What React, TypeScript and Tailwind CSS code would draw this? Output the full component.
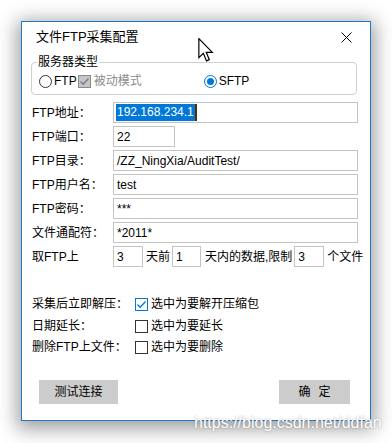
import React from "react";

const FONT = { fontFamily: '"Liberation Sans", "Noto Sans CJK SC", sans-serif' };

function Input({ w, value, selected }: { w: string; value: string; selected?: boolean }) {
  return (
    <div className={`${w} h-[21px] border border-[#c4c4c4] bg-white flex items-center pl-[2px] text-[12px] leading-[16px] text-black overflow-hidden whitespace-nowrap`}>
      {selected ? (
        <span className="flex items-center">
          <span className="bg-[#0078d7] text-white px-[1px] h-[17px] leading-[17px]">{value}</span>
          <span className="w-[2px] h-[17px] bg-[#5a2c00]" />
        </span>
      ) : (
        <span className="pl-[1px]">{value}</span>
      )}
    </div>
  );
}

function Row({ label, children }: { label: string; children: React.ReactNode }) {
  return (
    <div className="flex items-center h-[21px]">
      <div className="w-[81px] text-[12px] leading-[16px] text-black whitespace-nowrap">{label}</div>
      {children}
    </div>
  );
}

function CheckBox({ checked }: { checked?: boolean }) {
  return (
    <div className={`w-[13px] h-[13px] border ${checked ? "border-[#0078d7]" : "border-[#333333]"} bg-white flex items-center justify-center`}>
      {checked && (
        <svg width="11" height="11" viewBox="0 0 11 11">
          <path d="M1.5 5.5 L4.2 8.2 L9.5 2.5" fill="none" stroke="#0078d7" strokeWidth="1.3" />
        </svg>
      )}
    </div>
  );
}

function CheckRow({ label, text, checked, h }: { label: string; text: string; checked?: boolean; h: string }) {
  return (
    <div className={`flex items-center ${h}`}>
      <div className="w-[103px] text-[12px] leading-[16px] text-black whitespace-nowrap">{label}</div>
      <CheckBox checked={checked} />
      <span className="ml-[3px] text-[12px] leading-[16px] text-black whitespace-nowrap">{text}</span>
    </div>
  );
}

export default function App() {
  return (
    <div className="w-[392px] h-[443px] bg-white relative overflow-hidden pt-[21px] pl-[21px]" style={FONT}>
      <div className="w-[350px] h-[400px] border border-[#1c79c9] bg-white flex flex-col shadow-[0_4px_18px_4px_rgba(0,0,0,0.38)]">
        {/* title bar */}
        <div className="h-[30px] flex items-center justify-between pl-[14px] pr-[18px]">
          <span className="text-[13px] leading-[18px] text-black">文件FTP采集配置</span>
          <svg width="11" height="11" viewBox="0 0 11 11">
            <path d="M0.5 0.5 L10.5 10.5 M10.5 0.5 L0.5 10.5" stroke="#000" strokeWidth="1" />
          </svg>
        </div>

        {/* group box */}
        <fieldset className="mt-[2px] ml-[9px] w-[326px] border border-[#d0d0d0] rounded-[4px] pb-[2px]">
          <legend className="ml-[5px] px-[1px] text-[12px] leading-[16px] text-black">服务器类型</legend>
          <div className="h-[22px] flex items-center pl-[7px]">
            <div className="w-[13px] h-[13px] rounded-full border border-[#333333] bg-white" />
            <span className="ml-[2px] text-[12px] leading-[16px] text-black">FTP</span>
            <div className="ml-[1px] w-[13px] h-[13px] border border-[#8a8a8a] bg-[#c6c6c6] flex items-center justify-center">
              <svg width="11" height="11" viewBox="0 0 11 11">
                <path d="M1.5 5.5 L4.2 8.2 L9.5 2.5" fill="none" stroke="#7a7a7a" strokeWidth="1.3" />
              </svg>
            </div>
            <span className="ml-[3px] text-[12px] leading-[16px] text-[#8c8c8c]">被动模式</span>
            <div className="ml-[62px] w-[13px] h-[13px] rounded-full border border-[#0078d7] bg-white flex items-center justify-center">
              <div className="w-[7px] h-[7px] rounded-full bg-[#0078d7]" />
            </div>
            <span className="ml-[2px] text-[12px] leading-[16px] text-black">SFTP</span>
          </div>
        </fieldset>

        {/* form rows */}
        <div className="mt-[7px] pl-[10px] flex flex-col gap-[3px]">
          <Row label="FTP地址："><Input w="w-[245px]" value="192.168.234.1" selected /></Row>
          <Row label="FTP端口："><Input w="w-[62px]" value="22" /></Row>
          <Row label="FTP目录："><Input w="w-[245px]" value="/ZZ_NingXia/AuditTest/" /></Row>
          <Row label="FTP用户名："><Input w="w-[245px]" value="test" /></Row>
          <Row label="FTP密码："><Input w="w-[245px]" value="***" /></Row>
          <Row label="文件通配符："><Input w="w-[245px]" value="*2011*" /></Row>
          <Row label="取FTP上">
            <Input w="w-[30px]" value="3" />
            <span className="ml-[3px] text-[12px] leading-[16px] text-black whitespace-nowrap">天前</span>
            <div className="ml-[2px]"><Input w="w-[29px]" value="1" /></div>
            <span className="ml-[4px] text-[12px] leading-[16px] text-black whitespace-nowrap">天内的数据,限制</span>
            <div className="ml-[2px]"><Input w="w-[30px]" value="3" /></div>
            <span className="ml-[3px] text-[12px] leading-[16px] text-black whitespace-nowrap">个文件</span>
          </Row>
        </div>

        {/* checkboxes */}
        <div className="mt-[26px] pl-[10px] flex flex-col">
          <CheckRow label="采集后立即解压：" text="选中为要解开压缩包" checked h="h-[22px]" />
          <CheckRow label="日期延长：" text="选中为要延长" h="h-[22px]" />
          <CheckRow label="删除FTP上文件：" text="选中为要删除" h="h-[20px]" />
        </div>

        {/* buttons */}
        <div className="mt-[23px] flex justify-between pl-[17px] pr-[20px]">
          <div className="w-[79px] h-[24px] bg-[#cccccc] flex items-center justify-center text-[12px] leading-[16px] text-black">测试连接</div>
          <div className="w-[71px] h-[24px] bg-[#cccccc] flex items-center justify-center gap-[8px] text-[12px] leading-[16px] text-black">
            <span>确</span>
            <span>定</span>
          </div>
        </div>
      </div>

      {/* mouse cursor */}
      <svg className="absolute left-[198px] top-[38px]" width="16" height="25" viewBox="0 0 13 21">
        <path d="M0.5 0.5 L0.5 16.5 L4.3 12.8 L6.9 19.2 L9.3 18.2 L6.7 12 L11.8 12 Z" fill="#fff" stroke="#000" strokeWidth="1" strokeLinejoin="miter" />
      </svg>

      {/* watermark */}
      <span className="absolute left-[194px] top-[413px] text-[16px] leading-[20px] text-white whitespace-nowrap [text-shadow:0_0_2px_rgba(0,0,0,0.35)]">
        https://blog.csdn.net/ddfan
      </span>
    </div>
  );
}
